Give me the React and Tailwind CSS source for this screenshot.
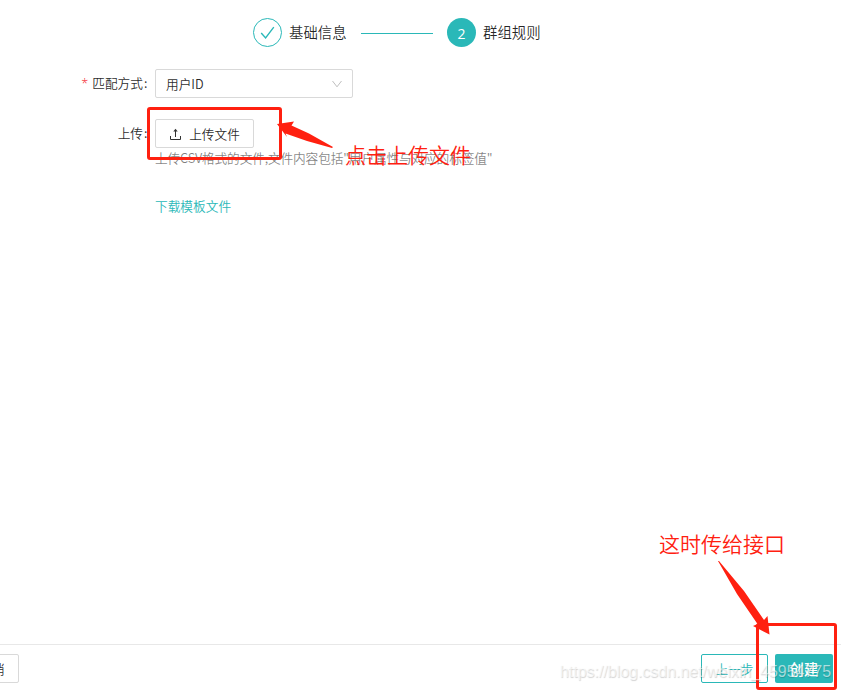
const outlineButton = "box-border flex h-[29px] items-center justify-center whitespace-nowrap rounded-[2px] border bg-white";

function Steps() {
    return (
        <div className="flex h-[29px] items-center pl-[253px] text-[14.4px] text-black/85">
            {/* Finished step */}
            <div className="flex items-center gap-[7px]">
                <span className="flex size-[29px] items-center justify-center rounded-full border border-[#2ab8b8]">
                    <svg width="15" height="15" viewBox="0 0 15 15" fill="none" stroke="#2ab8b8" strokeWidth="1.4">
                        <path d="M1.2 8 5.6 13 13.8 2.2" />
                    </svg>
                </span>
                <span className="w-[58px] whitespace-nowrap pb-px">基础信息</span>
            </div>

            <span className="ml-[14px] mr-[14px] mt-[2px] h-px w-[72px] bg-[#2ab8b8]" />

            {/* Current step */}
            <div className="flex items-center gap-[7px]">
                <span className="flex size-[29px] items-center justify-center rounded-full bg-[#2ab8b8] pt-px font-['Open_Sans',sans-serif] text-[14px] font-medium text-white">2</span>
                <span className="whitespace-nowrap pb-px">群组规则</span>
            </div>
        </div>
    );
}

function FormRow({ label, required, children }) {
    return (
        <div className="flex h-[29px] items-center">
            <div className="flex w-[148px] shrink-0 justify-end whitespace-nowrap pb-px">
                {required && <span className="mr-1 pt-px font-['Open_Sans',sans-serif] text-[#f5222d]">*</span>}
                {label}<span className="ml-px w-[4px]">:</span>
            </div>
            <div className="ml-[7px]">{children}</div>
        </div>
    );
}

function UploadIcon() {
    return (
        <svg className="mt-[2px]" width="13" height="13" viewBox="0 0 13 13" fill="none" stroke="#333" strokeWidth="1">
            <path d="M1.5 8v3.5h10V8M6.5 9V3" />
            <path d="M4.3 3.6 6.5 .8 8.7 3.6Z" fill="#333" stroke="none" />
        </svg>
    );
}

function Annotations() {
    return (
        <>
            <div className="absolute left-[147px] top-[107px] h-[53px] w-[135px] rounded-[3px] border-3 border-[#ff2010]" />
            <div className="absolute left-[756px] top-[623px] h-[67px] w-[81px] rounded-[3px] border-3 border-[#ff2010]" />
            <svg className="absolute left-0 top-0" width="841" height="691" fill="#ff2010">
                <path d="M277 124 294 121.5 291.5 125.5 309 133.5 333 147 332 148 307 141 285.5 133.5 287 137Z" />
                <path d="M718 561 719 561 744 591 764 620 767.5 616 769.5 634.5 753 626 757.5 624 737 594Z" />
            </svg>
            <div className="absolute left-[345px] top-[139px] whitespace-nowrap text-[21px] leading-[30px] text-[#ff2010]">点击上传文件</div>
            <div className="absolute left-[659px] top-[528px] whitespace-nowrap text-[21px] leading-[30px] text-[#ff2010]">这时传给接口</div>
            <div className="absolute left-[560px] top-[661px] whitespace-nowrap font-['Liberation_Sans',sans-serif] text-[16px] leading-[22px] tracking-[-0.03px] text-white/60 [text-shadow:0.5px_1px_1px_rgba(0,0,0,0.18)]">
                https://blog.csdn.net/weixin_45954775
            </div>
        </>
    );
}

export default function App() {
    return (
        <div className="relative flex h-[691px] w-[841px] flex-col overflow-hidden bg-white pt-[18px] font-['Noto_Sans_CJK_SC',sans-serif] text-[12.7px] font-[350] text-black/85">
            <Steps />

            <div className="mt-[22px] flex flex-1 flex-col">
                <FormRow label="匹配方式" required>
                    <div className="flex h-[29px] w-[198px] items-center justify-between rounded-[2px] border border-[#d9d9d9] pl-[10px] pr-[9px]">
                        <span>用户ID</span>
                        <svg width="12" height="8" viewBox="0 0 12 8" fill="none" stroke="#bfbfbf">
                            <path d="M1.5 1 6 6.8 10.5 1" />
                        </svg>
                    </div>
                </FormRow>

                <div className="h-[21px]" />

                <FormRow label="上传">
                    <button className={`${outlineButton} w-[99px] gap-[7px] border-[#d9d9d9]`}>
                        <UploadIcon />
                        上传文件
                    </button>
                </FormRow>

                <div className="pl-[155px]">
                    <p className="whitespace-nowrap leading-5 tracking-[-0.15px] text-black/50">上传CSV格式的文件,文件内容包括"用户属性与对应的标签值"</p>
                    <a className="mt-[28px] block w-fit leading-5 text-[#2ab8b8]">下载模板文件</a>
                </div>
            </div>

            {/* Bottom action bar */}
            <div className="flex h-[47px] shrink-0 items-start justify-between border-t border-[#e8e8e8] pr-[8px] pt-[9px]">
                <button className={`${outlineButton} -ml-[35px] w-[54px] border-[#d9d9d9]`}>取消</button>
                <div className="flex gap-[7px]">
                    <button className={`${outlineButton} w-[67px] border-[#2ab8b8] text-[#2ab8b8]`}>上一步</button>
                    <button className="h-[29px] w-[58px] rounded-[2px] bg-[#2ab8b8] text-[14.4px] font-medium text-white">创建</button>
                </div>
            </div>

            <Annotations />
        </div>
    );
}
